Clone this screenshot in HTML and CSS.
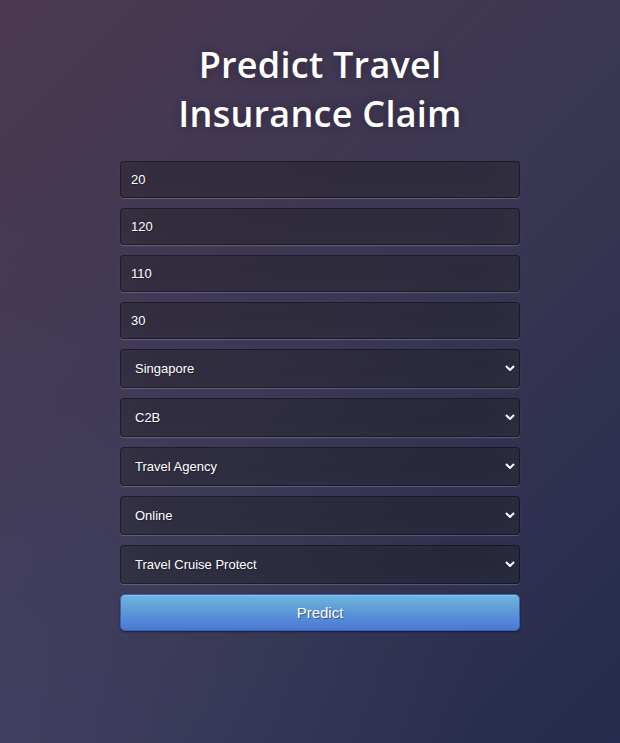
FILE: index.html
```html
<!DOCTYPE html>
<html lang="en">
<head>
<meta charset="utf-8">
<title>Predict Travel Insurance Claim</title>
<link rel="stylesheet" href="styles.css">
</head>
<body>
<div class="login">
  <h1 class="title">Predict Travel Insurance Claim</h1>
  <form class="form">
    <input class="field" type="text" value="20">
    <input class="field" type="text" value="120">
    <input class="field" type="text" value="110">
    <input class="field" type="text" value="30">
    <div class="select-wrap">
      <select class="field select"><option>Singapore</option></select>
      <svg class="chev" width="10" height="6" viewBox="0 0 10 6"><path d="M1 1 L5 5 L9 1" fill="none" stroke="#fff" stroke-width="2"/></svg>
    </div>
    <div class="select-wrap">
      <select class="field select"><option>C2B</option></select>
      <svg class="chev" width="10" height="6" viewBox="0 0 10 6"><path d="M1 1 L5 5 L9 1" fill="none" stroke="#fff" stroke-width="2"/></svg>
    </div>
    <div class="select-wrap">
      <select class="field select"><option>Travel Agency</option></select>
      <svg class="chev" width="10" height="6" viewBox="0 0 10 6"><path d="M1 1 L5 5 L9 1" fill="none" stroke="#fff" stroke-width="2"/></svg>
    </div>
    <div class="select-wrap">
      <select class="field select"><option>Online</option></select>
      <svg class="chev" width="10" height="6" viewBox="0 0 10 6"><path d="M1 1 L5 5 L9 1" fill="none" stroke="#fff" stroke-width="2"/></svg>
    </div>
    <div class="select-wrap">
      <select class="field select"><option>Travel Cruise Protect</option></select>
      <svg class="chev" width="10" height="6" viewBox="0 0 10 6"><path d="M1 1 L5 5 L9 1" fill="none" stroke="#fff" stroke-width="2"/></svg>
    </div>
    <button class="btn" type="button">Predict</button>
  </form>
</div>
</body>
</html>
```

FILE: styles.css
```css
html, body {
  margin: 0;
  height: 100%;
}
body {
  font-family: "Liberation Sans", Arial, sans-serif;
  background:
    radial-gradient(ellipse at 0% 100%, rgba(80, 80, 120, 0.35) 0%, rgba(80, 80, 120, 0) 55%),
    linear-gradient(135deg, #4c3952 0%, #3a3753 50%, #252b4c 100%);
  overflow: hidden;
  padding-left: 20px;
  box-sizing: border-box;
}
.login {
  width: 400px;
  margin: 0 auto;
  padding-top: 40px;
}
.title {
  font-family: "Open Sans", sans-serif;
  font-weight: 600;
  font-size: 36px;
  line-height: 49px;
  color: #fff;
  text-shadow: 0 0 10px rgba(0, 0, 0, 0.3);
  letter-spacing: 0.25px;
  text-align: center;
  margin: 0 0 23px;
}
.form {
  display: flex;
  flex-direction: column;
  gap: 10px;
}
.field {
  display: block;
  box-sizing: border-box;
  width: 100%;
  margin: 0;
  background: rgba(0, 0, 0, 0.3);
  outline: none;
  padding: 10px;
  font-family: "Liberation Sans", Arial, sans-serif;
  font-size: 13px;
  color: #fff;
  text-shadow: 1px 1px 1px rgba(0, 0, 0, 0.3);
  border: 1px solid rgba(0, 0, 0, 0.3);
  border-radius: 4px;
  box-shadow: inset 0 -5px 45px rgba(100, 100, 100, 0.2), 0 1px 1px rgba(255, 255, 255, 0.2);
  height: 37px;
}
.select-wrap {
  position: relative;
}
.select {
  appearance: none;
  -webkit-appearance: none;
  height: 39px;
  padding: 0 14px;
  font-size: 13px;
}
.chev {
  position: absolute;
  right: 5px;
  top: 16px;
  pointer-events: none;
}
.btn {
  display: block;
  width: 100%;
  margin: 0;
  padding: 9px 14px;
  font-family: "Liberation Sans", Arial, sans-serif;
  font-size: 15px;
  line-height: normal;
  color: #fff;
  border-radius: 5px;
  background-color: #4a77d4;
  background-image: linear-gradient(to bottom, #6eb6de, #4a77d4);
  border: 1px solid #3762bc;
  text-shadow: 1px 1px 1px rgba(0, 0, 0, 0.4);
  box-shadow: inset 0 1px 0 rgba(255, 255, 255, 0.2), 0 1px 2px rgba(0, 0, 0, 0.5);
  cursor: pointer;
}
```
